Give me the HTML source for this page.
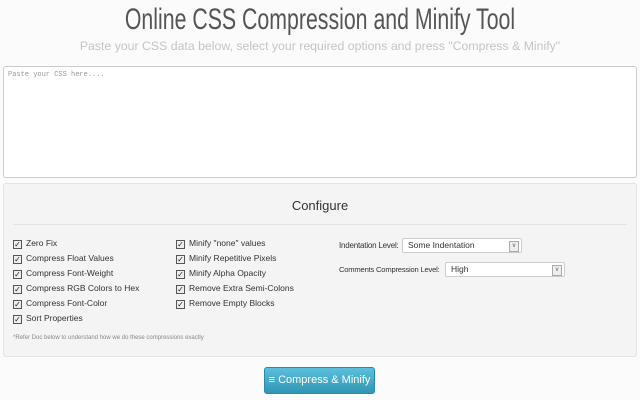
<!DOCTYPE html>
<html><head><meta charset="utf-8"><style>
html,body{margin:0;width:640px;height:400px;overflow:hidden}
body{background:#fbfbfb;font-family:"Liberation Sans",sans-serif;position:relative}
.a{position:absolute;white-space:nowrap}
h1{position:absolute;margin:0;left:0;width:640px;top:3px;text-align:center;font-weight:normal;font-size:30px;color:#555;transform:scaleX(0.71);transform-origin:320px 0;white-space:nowrap}
.sub{top:39px;left:0;width:640px;text-align:center;font-size:12.3px;color:#c4c4c4}
.ta{left:3px;top:66px;width:632px;height:110px;background:#fff;border:1px solid #ccc;border-radius:3px}
.ta span{position:absolute;left:4px;top:4px;font-family:"Liberation Mono",monospace;font-size:7px;color:#999}
.panel{left:3px;top:183px;width:632px;height:172px;background:#f4f4f4;border:1px solid #e3e3e3;border-radius:3px}
.cfg{top:198px;left:0;width:640px;text-align:center;font-size:13px;color:#333}
.hr{left:13px;top:224px;width:614px;height:1px;background:#e4e4e4}
.cb{font-size:8.5px;color:#333;height:12px;line-height:10px}
.cb i{display:inline-block;width:7px;height:7px;border:1px solid #555;background:#eee;vertical-align:-1px;margin-right:4px;font-style:normal;font-size:8px;line-height:7px;text-align:center;color:#222}
.lbl{font-size:8px;color:#333;letter-spacing:-0.2px}
.sel{height:15px;background:#fff;border:1px solid #ccc;border-radius:2px;font-size:8.5px;color:#333;line-height:13px;box-sizing:border-box;padding-left:5px}
.sel b{position:absolute;right:2px;top:2px;width:8px;height:9px;border:1px solid #aaa;background:#eee;font-size:6px;line-height:9px;text-align:center;font-weight:normal;color:#555}
.btn{left:264px;top:367px;width:111px;height:27px;border-radius:3px;background:linear-gradient(#5bc0de,#2f96b4);border:1px solid #2a8aa8;box-sizing:border-box;color:#fff;font-size:11px;line-height:25px;text-align:center}
</style></head><body>
<h1>Online CSS Compression and Minify Tool</h1>
<div class="a sub">Paste your CSS data below, select your required options and press "Compress &amp; Minify"</div>
<div class="a ta"><span>Paste your CSS here....</span></div>
<div class="a panel"></div>
<div class="a cfg">Configure</div>
<div class="a hr"></div>
<div class="a cb" style="left:13px;top:238px"><i>✓</i>Zero Fix</div>
<div class="a cb" style="left:13px;top:253px"><i>✓</i>Compress Float Values</div>
<div class="a cb" style="left:13px;top:268px"><i>✓</i>Compress Font-Weight</div>
<div class="a cb" style="left:13px;top:283px"><i>✓</i>Compress RGB Colors to Hex</div>
<div class="a cb" style="left:13px;top:298px"><i>✓</i>Compress Font-Color</div>
<div class="a cb" style="left:13px;top:313px"><i>✓</i>Sort Properties</div>
<div class="a cb" style="left:176px;top:238px"><i>✓</i>Minify "none" values</div>
<div class="a cb" style="left:176px;top:253px"><i>✓</i>Minify Repetitive Pixels</div>
<div class="a cb" style="left:176px;top:268px"><i>✓</i>Minify Alpha Opacity</div>
<div class="a cb" style="left:176px;top:283px"><i>✓</i>Remove Extra Semi-Colons</div>
<div class="a cb" style="left:176px;top:298px"><i>✓</i>Remove Empty Blocks</div>
<div class="a" style="left:13px;top:335px;font-size:6px;color:#888">*Refer Doc below to understand how we do these compressions exactly</div>
<div class="a lbl" style="left:339px;top:241px">Indentation Level:</div>
<div class="a sel" style="left:402px;top:238px;width:120px">Some Indentation<b>v</b></div>
<div class="a lbl" style="left:339px;top:265px;font-size:7.6px">Comments Compression Level:</div>
<div class="a sel" style="left:445px;top:262px;width:120px">High<b>v</b></div>
<div class="a btn">≡ Compress &amp; Minify</div>
</body></html>
